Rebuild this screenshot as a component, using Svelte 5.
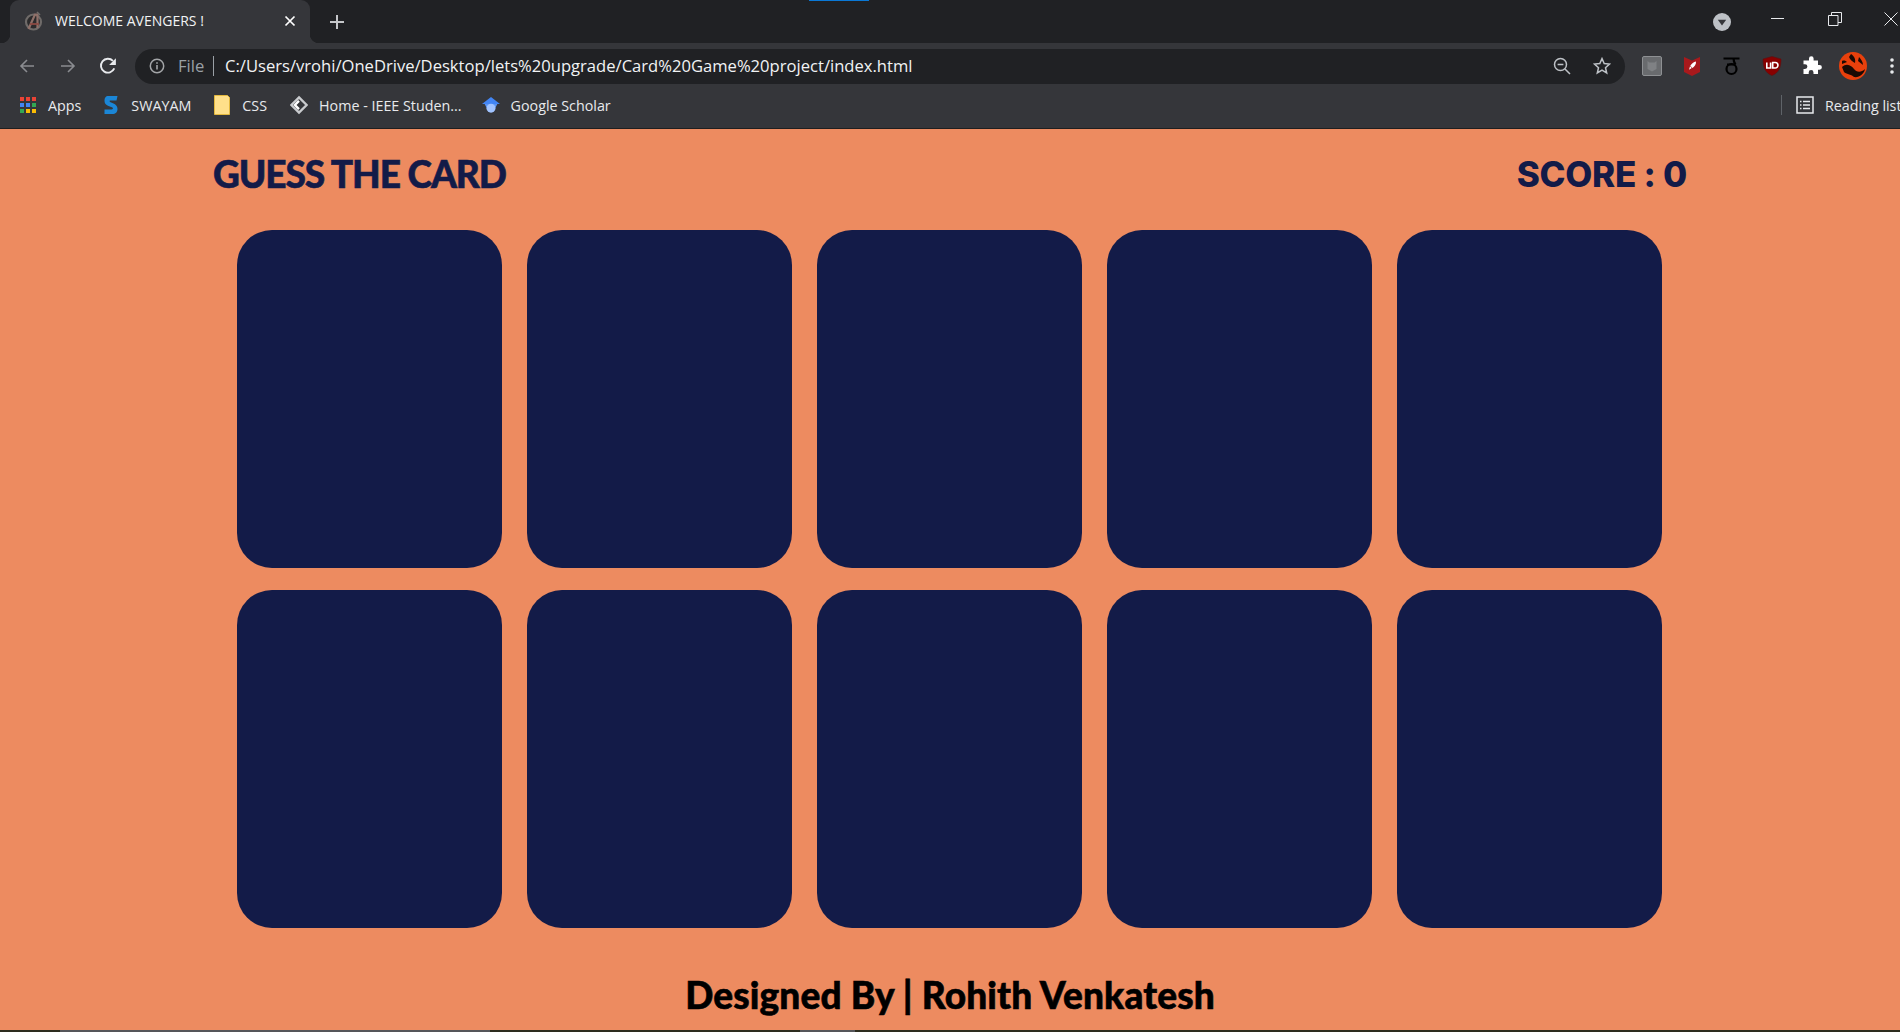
<script>
  const bookmarks = [
    { id: 'apps', label: 'Apps' },
    { id: 'swayam', label: 'SWAYAM' },
    { id: 'folder', label: 'CSS' },
    { id: 'ieee', label: 'Home - IEEE Studen...' },
    { id: 'scholar', label: 'Google Scholar' }
  ];
  const appColors = ['#ea4335', '#ea4335', '#ea4335', '#4285f4', '#4285f4', '#34a853', '#34a853', '#fbbc04', '#fbbc04'];
  const cards = Array.from({ length: 10 }, (_, i) => i);
  let score = $state(0);
</script>

<div class="page">
  <div class="browser">
    <div class="tabstrip">
      <div class="accent"></div>
      <div class="tab">
        <svg class="favicon" viewBox="0 0 20 20">
          <circle cx="9.500" cy="11" r="7.500" fill="#2c2b2c" stroke="#6f6b69" stroke-width="2.200" />
          <path d="M4.500 18 11 3.500h2.500V17" fill="none" stroke="#8f7069" stroke-width="2.200" />
          <path d="M6 13h9" stroke="#8c4a42" stroke-width="1.800" />
          <path d="M13 1l3 3" stroke="#6f6b69" stroke-width="1.600" />
        </svg>
        <span class="tab-title">WELCOME AVENGERS !</span>
        <svg class="tab-close" viewBox="0 0 12 12"><path d="M1.5 1.5l9 9M10.5 1.5l-9 9" stroke="#fff" stroke-width="1.7" /></svg>
      </div>
      <svg class="new-tab" viewBox="0 0 14 14"><path d="M7 0v14M0 7h14" stroke="#c4c6c9" stroke-width="2" /></svg>
      <div class="spacer"></div>
      <div class="tab-search">
        <svg viewBox="0 0 18 18"><circle cx="9" cy="9" r="9" fill="#bdc1c6" /><path d="M4.800 6.800h8.400L9 12.600z" fill="#35363a" /></svg>
      </div>
      <div class="win-buttons">
        <svg viewBox="0 0 14 14"><path d="M0 6.500h13" stroke="#e8eaed" stroke-width="1" /></svg>
        <svg viewBox="0 0 14 14"><path d="M.5 3.500h9.500v10H.5zM3.500 3.500V.5h10v10H10" fill="none" stroke="#e8eaed" stroke-width="1" /></svg>
        <svg viewBox="0 0 14 14"><path d="M.5.5l13 13M13.500.5l-13 13" stroke="#e8eaed" stroke-width="1" /></svg>
      </div>
    </div>

    <div class="toolbar">
      <svg class="nav" viewBox="0 0 16 16"><path d="M15 8H2M8 2 2 8l6 6" fill="none" stroke="#8a8c90" stroke-width="1.600" /></svg>
      <svg class="nav" viewBox="0 0 16 16"><path d="M1 8h13M8 2l6 6-6 6" fill="none" stroke="#8a8c90" stroke-width="1.600" /></svg>
      <svg class="nav reload" viewBox="0 0 16 16">
        <path d="M13.600 10.200A6.200 6.200 0 1 1 12.400 3.400" fill="none" stroke="#e8eaed" stroke-width="1.700" />
        <path d="M15 1v6H9z" fill="#e8eaed" />
      </svg>
      <div class="omnibox">
        <svg class="info" viewBox="0 0 16 16">
          <circle cx="8" cy="8" r="6.700" fill="none" stroke="#a3a5a8" stroke-width="1.500" />
          <path d="M8 7v4.400M8 4.200v1.600" stroke="#a3a5a8" stroke-width="1.600" />
        </svg>
        <span class="scheme">File</span>
        <span class="sep"></span>
        <span class="url">C:/Users/vrohi/OneDrive/Desktop/lets%20upgrade/Card%20Game%20project/index.html</span>
        <div class="spacer"></div>
        <svg class="omni-icon zoom-out" viewBox="0 0 18 18">
          <circle cx="7.500" cy="7.500" r="6" fill="none" stroke="#bdc1c6" stroke-width="1.500" />
          <path d="M4.600 7.500h5.800M12 12l5 5" stroke="#bdc1c6" stroke-width="1.500" />
        </svg>
        <svg class="omni-icon" viewBox="0 0 18 18">
          <path d="M9 1.600l2.200 5 5.300.5-4 3.600 1.200 5.300L9 13.200 4.300 16l1.200-5.300-4-3.600 5.300-.5z" fill="none" stroke="#bdc1c6" stroke-width="1.500" />
        </svg>
      </div>
      <div class="extensions">
        <svg viewBox="0 0 20 20">
          <rect x=".5" y=".5" width="19" height="19" rx="1.500" fill="#696b6e" stroke="#8e9093" />
          <path d="M5.500 5l2 1.500h5l2-1.500v8l-4.500 2.500L5.500 13z" fill="#7f8184" />
        </svg>
        <svg viewBox="0 0 20 20">
          <path d="M2 1l8 3.500L18 1v15l-8 4-8-4z" fill="#a9191c" />
          <path d="M14 5.500c.3 3-1.500 5-3.500 6.500L8.300 9.800C9.800 7.500 11.500 6 14 5.500zM8 10.300l1.800 1.800-2.800 1.700z" fill="#fff" />
        </svg>
        <svg viewBox="0 0 20 20">
          <path d="M1.500 2.500h16M5 8.500h8.500M13.500 8.500c-1-1.500-2-3-2-6" fill="none" stroke="#000" stroke-width="2.200" />
          <circle cx="9.500" cy="13" r="5" fill="none" stroke="#000" stroke-width="2.200" />
        </svg>
        <svg viewBox="0 0 20 20">
          <path d="M10 .5l9 2.500c0 8-2 14-9 16.500C3 17 1 11 1 3z" fill="#800" stroke="#5c1010" stroke-width=".6" />
          <path d="M4.800 6.500v5.500h3.800V6.500M10.700 6.500h2.500a2.700 2.700 0 0 1 0 5.500h-2.500z" fill="none" stroke="#fff" stroke-width="1.600" />
        </svg>
        <svg viewBox="0 0 20 20">
          <path d="M7 2.500a2.300 2.300 0 0 1 4.600 0V4.500h4.400v4.400h1.500a2.400 2.400 0 0 1 0 4.800H16V18h-4.500v-1.500a2.400 2.400 0 0 0-4.800 0V18H1.500v-5H3a2.400 2.400 0 0 0 0-4.800H1.500V4.500H7z" fill="#fff" />
        </svg>
        <svg class="avatar" viewBox="0 0 28 28">
          <circle cx="14" cy="14" r="14" fill="#e8400c" />
          <path d="M3 15c5-5 10-1 12 2s7 4 11 0c-1 5-6 9-11 8-3-3-8-3-10-5zM12 2c3 2 5 5 4 9-2-1-5-3-6-6zM20 5c2 2 4 5 4 8l-5-4zM3 9c2-1 4 0 5 1l-5 2z" fill="#1b0a04" />
        </svg>
        <svg class="dots" viewBox="0 0 4 16">
          <circle cx="2" cy="2" r="1.800" fill="#e8eaed" /><circle cx="2" cy="8" r="1.800" fill="#e8eaed" /><circle cx="2" cy="14" r="1.800" fill="#e8eaed" />
        </svg>
      </div>
    </div>

    <div class="bookmarks">
      {#each bookmarks as b}
        <div class="bookmark {b.id}">
          {#if b.id === 'apps'}
            <div class="apps-icon">
              {#each appColors as c}<i style="background: {c}"></i>{/each}
            </div>
          {:else if b.id === 'swayam'}
            <svg viewBox="0 0 15 20">
              <path d="M14 1 5 1C2 1 1 3 1 6c0 3 2 4 4 5l4 1.500c1 1 0 2-1 2H1V19h8c3 0 5-2 5-5 0-3-2-4.500-4-5.500L6.500 7C5.800 6 6 5.500 7 5.500h6z" fill="#1b86d6" />
            </svg>
          {:else if b.id === 'folder'}
            <svg viewBox="0 0 16 20">
              <path d="M.5.5h13l2 2v17H.5z" fill="#ffe08a" stroke="#e3b83e" />
            </svg>
          {:else if b.id === 'ieee'}
            <svg viewBox="0 0 20 20">
              <path d="M10 1.500 18.500 10 10 18.500 1.500 10z" fill="none" stroke="#c9cbce" stroke-width="2.600" />
              <path d="M10 5.500 5.500 10 10 14.500" fill="none" stroke="#fff" stroke-width="2.600" />
            </svg>
          {:else}
            <svg viewBox="0 0 20 20">
              <path d="M10 1 20 9H0z" fill="#4285f4" />
              <path d="M3 9h14l-2 4H5z" fill="#5a95f5" />
              <circle cx="10" cy="13.500" r="5" fill="#a0c3ff" />
            </svg>
          {/if}
          <span>{b.label}</span>
        </div>
      {/each}
      <div class="spacer"></div>
      <span class="bm-sep"></span>
      <svg class="reading-icon" viewBox="0 0 18 18">
        <rect x="1" y="1" width="16" height="16" fill="none" stroke="#e8eaed" stroke-width="1.500" />
        <path d="M4 5.500h1.500M7 5.500h7M4 9h1.500M7 9h7M4 12.500h1.500M7 12.500h7" stroke="#e8eaed" stroke-width="1.500" />
      </svg>
      <span class="reading">Reading list</span>
    </div>
  </div>

  <main class="game">
    <header class="game-header">
      <h1>GUESS THE CARD</h1>
      <h2>SCORE : {score}</h2>
    </header>
    <section class="grid">
      {#each cards as c (c)}
        <div class="card"></div>
      {/each}
    </section>
    <footer class="credit">Designed By | Rohith Venkatesh</footer>
  </main>

  <div class="taskbar-edge">
    <i class="seg-a"></i>
    <i class="seg-b"></i>
  </div>
</div>

<style>
  :global(body) {
    margin: 0;
    overflow: hidden;
    background: #ed8b60;
  }

  .page {
    height: 1032px;
    display: flex;
    flex-direction: column;
    font-family: "Open Sans", "Noto Sans", sans-serif;
  }

  .spacer {
    flex: 1;
  }

  .browser {
    color: #e8eaed;
    background: #35363a;
    border-bottom: 1px solid #1f1f1f;
  }

  .tabstrip {
    height: 43px;
    display: flex;
    align-items: center;
    background: #202124;
    position: relative;
  }

  .accent {
    position: absolute;
    top: 0;
    left: 809px;
    width: 60px;
    height: 1px;
    background: #0a78d6;
  }

  .tab {
    align-self: flex-end;
    height: 43px;
    width: 300px;
    box-sizing: border-box;
    margin-left: 10px;
    padding: 0 14px 2px 14px;
    display: flex;
    align-items: center;
    background: #35363a;
    border-radius: 9px 9px 0 0;
    position: relative;
  }

  .tab::before,
  .tab::after {
    content: "";
    position: absolute;
    bottom: 0;
    width: 9px;
    height: 9px;
  }

  .tab::before {
    left: -9px;
    background: radial-gradient(circle at 0 0, transparent 9px, #35363a 9.5px);
  }

  .tab::after {
    right: -9px;
    background: radial-gradient(circle at 100% 0, transparent 9px, #35363a 9.5px);
  }

  .favicon {
    width: 20px;
    height: 20px;
    flex: none;
  }

  .tab-title {
    margin-left: 11px;
    font-size: 14px;
    color: #f1f3f4;
    white-space: nowrap;
    flex: 1;
  }

  .tab-close {
    width: 12px;
    height: 12px;
  }

  .new-tab {
    width: 14px;
    height: 14px;
    margin-left: 20px;
  }

  .tab-search {
    display: flex;
    margin-right: 40px;
  }

  .tab-search svg {
    width: 18px;
    height: 18px;
  }

  .win-buttons {
    display: flex;
    align-items: center;
    gap: 42.5px;
    margin-right: 2px;
    margin-bottom: 6px;
  }

  .win-buttons svg {
    width: 14px;
    height: 14px;
  }

  .toolbar {
    height: 46px;
    display: flex;
    align-items: center;
    padding-left: 19px;
  }

  .nav {
    width: 16px;
    height: 16px;
    margin-right: 25px;
    flex: none;
  }

  .nav.reload {
    width: 18px;
    height: 18px;
    margin: 0 25px 0 -2px;
  }

  .omnibox {
    height: 35px;
    width: 1490px;
    margin-left: -7px;
    flex: none;
    box-sizing: border-box;
    padding: 0 14px 1px 14px;
    display: flex;
    align-items: center;
    background: #202124;
    border-radius: 18px;
    font-size: 16.6px;
  }

  .info {
    width: 16px;
    height: 16px;
    margin-right: 13px;
  }

  .scheme {
    color: #9aa0a6;
    width: 35px;
  }

  .sep {
    width: 1px;
    height: 20px;
    background: #9aa0a6;
  }

  .url {
    margin-left: 11px;
    color: #f1f3f4;
    white-space: nowrap;
  }

  .omni-icon {
    width: 18px;
    height: 18px;
  }

  .zoom-out {
    margin-right: 22px;
  }

  .extensions {
    display: flex;
    align-items: center;
    margin-left: 17px;
    gap: 20px;
  }

  .extensions svg {
    width: 20px;
    height: 20px;
    flex: none;
  }

  .extensions .avatar {
    width: 28px;
    height: 28px;
    margin: 0 -3px 0 -3px;
  }

  .extensions .dots {
    width: 4px;
    height: 16px;
    margin-left: 6px;
  }

  .bookmarks {
    height: 39px;
    box-sizing: border-box;
    padding: 0 0 7px 20px;
    display: flex;
    align-items: center;
    font-size: 14.3px;
    overflow: hidden;
    white-space: nowrap;
  }

  .bookmark {
    display: flex;
    align-items: center;
    gap: 11px;
    margin-right: 21px;
    color: #e8eaed;
  }

  .bookmark.apps {
    gap: 12px;
    margin-right: 21px;
  }

  .bookmark.swayam {
    margin-right: 22px;
  }

  .bookmark.folder {
    margin-right: 23px;
  }

  .bookmark.ieee {
    margin-right: 20px;
  }

  .bookmark svg {
    width: 18px;
    height: 20px;
  }

  .apps-icon {
    width: 16px;
    height: 16px;
    display: grid;
    grid-template-columns: repeat(3, 4px);
    grid-auto-rows: 4px;
    gap: 2px;
  }

  .apps-icon i {
    display: block;
  }

  .bm-sep {
    width: 1px;
    height: 20px;
    background: #5f6368;
    margin-right: 14px;
  }

  .reading-icon {
    width: 18px;
    height: 18px;
    margin-right: 11px;
  }

  .reading {
    width: 75px;
    overflow: hidden;
  }

  .game {
    flex: 1;
    display: flex;
    flex-direction: column;
    align-items: center;
    font-family: Lato, Inter, sans-serif;
  }

  .game-header {
    width: 1474px;
    margin-top: 22px;
    margin-bottom: 33px;
    display: flex;
    justify-content: space-between;
    color: #131b48;
  }

  h1,
  h2 {
    margin: 0;
    font-size: 37px;
    line-height: 46px;
    font-weight: 900;
  }

  h1 {
    letter-spacing: -1.05px;
    -webkit-text-stroke: 0.6px #131b48;
  }

  h2 {
    font-family: Inter, sans-serif;
    font-size: 35px;
    font-weight: 800;
    letter-spacing: -0.25px;
  }

  .grid {
    display: grid;
    grid-template-columns: repeat(5, 265px);
    grid-auto-rows: 338px;
    column-gap: 25px;
    row-gap: 22px;
    margin-right: 1px;
  }

  .card {
    background: #131b48;
    border-radius: 35px;
  }

  .credit {
    margin-top: 44px;
    font-size: 37px;
    line-height: 46px;
    font-weight: 900;
    letter-spacing: 0.15px;
    -webkit-text-stroke: 0.6px #000;
    color: #000;
  }

  .taskbar-edge {
    height: 2px;
    background: #2d2c1e;
    position: relative;
    flex: none;
  }

  .taskbar-edge i {
    position: absolute;
    top: 0;
    height: 2px;
    background: #55565a;
  }

  .seg-a {
    left: 60px;
    width: 430px;
  }

  .seg-b {
    left: 800px;
    width: 55px;
  }
</style>
